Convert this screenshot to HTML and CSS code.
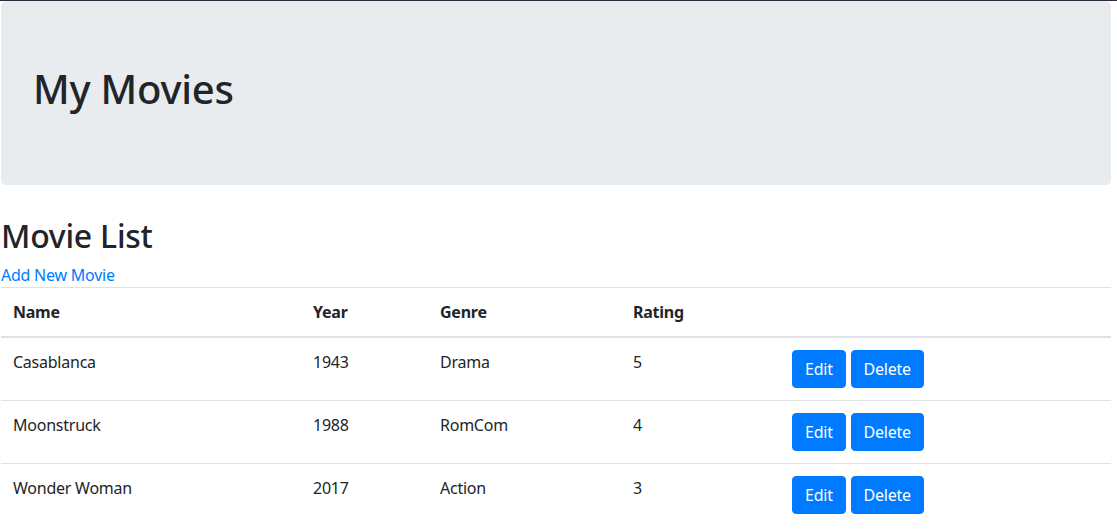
FILE: index.html
```html
<!DOCTYPE html>
<html lang="en">
<head>
<meta charset="utf-8">
<title>My Movies</title>
<link rel="stylesheet" href="styles.css">
</head>
<body>
<div class="container">
  <div class="jumbotron">
    <h1 class="jumbo-title">My Movies</h1>
  </div>
  <h2 class="section-title">Movie List</h2>
  <a class="add-link" href="#">Add New Movie</a>
  <table class="table">
    <thead>
      <tr>
        <th class="c-name">Name</th>
        <th class="c-year">Year</th>
        <th class="c-genre">Genre</th>
        <th class="c-rating">Rating</th>
        <th class="c-actions"></th>
      </tr>
    </thead>
    <tbody>
      <tr>
        <td>Casablanca</td>
        <td>1943</td>
        <td>Drama</td>
        <td>5</td>
        <td><button class="btn">Edit</button> <button class="btn">Delete</button></td>
      </tr>
      <tr>
        <td>Moonstruck</td>
        <td>1988</td>
        <td>RomCom</td>
        <td>4</td>
        <td><button class="btn">Edit</button> <button class="btn">Delete</button></td>
      </tr>
      <tr>
        <td>Wonder Woman</td>
        <td>2017</td>
        <td>Action</td>
        <td>3</td>
        <td><button class="btn">Edit</button> <button class="btn">Delete</button></td>
      </tr>
    </tbody>
  </table>
</div>
</body>
</html>
```

FILE: styles.css
```css
* { box-sizing: border-box; }
html, body { margin: 0; padding: 0; }
body {
  font-family: "Noto Sans", "Segoe UI", "Liberation Sans", sans-serif;
  font-size: 16px;
  line-height: 1.5;
  letter-spacing: -0.015em;
  color: #212529;
  background: #fff;
  border-top: 1px solid #2a2a3c;
}
.container {
  width: 1110px;
  margin-left: 1px;
}
.jumbotron {
  background: #e9ecef;
  border-radius: 5px;
  padding: 64px 32px;
  margin-bottom: 32px;
}
.jumbo-title {
  margin: 0 0 8px;
  font-size: 40px;
  font-weight: 500;
  line-height: 1.2;
}
.section-title {
  margin: 0 0 8px;
  font-size: 32px;
  font-weight: 500;
  line-height: 1.2;
}
.add-link {
  color: #007bff;
  text-decoration: none;
  display: block;
}
.table {
  width: 100%;
  border-collapse: collapse;
  table-layout: fixed;
}
.table th, .table td {
  padding: 12px;
  text-align: left;
  vertical-align: top;
  border-top: 1px solid #dee2e6;
}
.table th { font-weight: 700; }
.table thead th { border-bottom: 2px solid #dee2e6; }
.table tbody tr:first-child td { border-top: none; }
.c-name { width: 300px; }
.c-year { width: 127px; }
.c-genre { width: 193px; }
.c-rating { width: 159px; }
.btn {
  font-family: inherit;
  font-size: 16px;
  line-height: 1.5;
  letter-spacing: -0.015em;
  color: #fff;
  background: #007bff;
  border: 1px solid #007bff;
  border-radius: 4px;
  padding: 6px 12px;
  margin-right: 1px;
  cursor: pointer;
}
```
